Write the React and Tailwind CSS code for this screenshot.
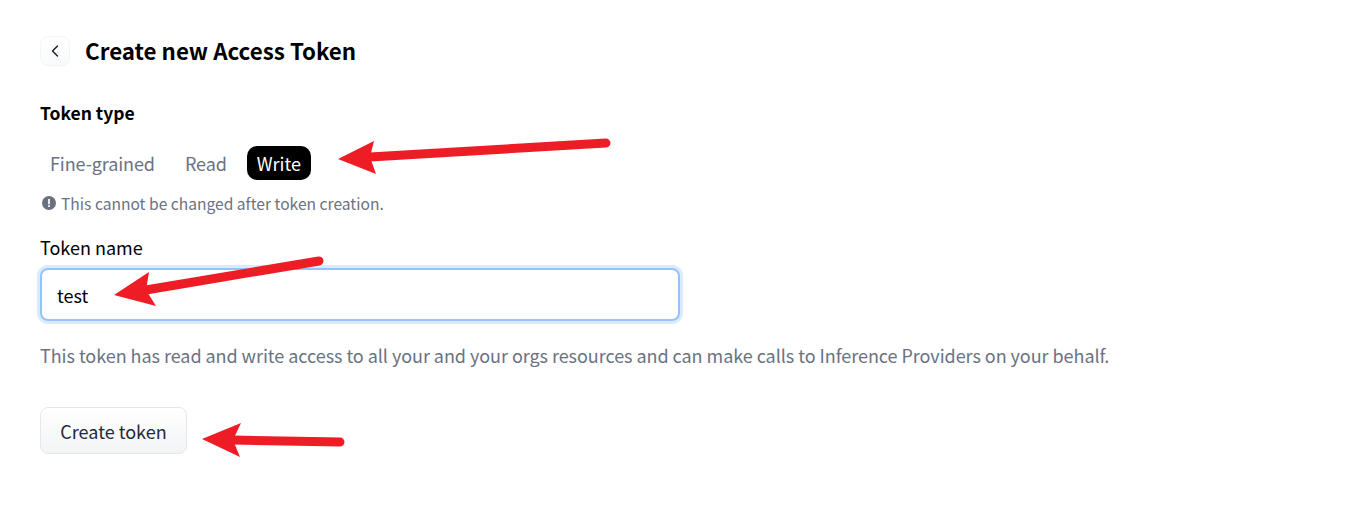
import { ChevronLeft } from 'lucide-react'

function Arrow({ tail, tip, wingA, wingB, neck }) {
  return (
    <>
      <line x1={tail[0]} y1={tail[1]} x2={neck[0]} y2={neck[1]} stroke="#ee1c25" strokeWidth="9" strokeLinecap="round" />
      <polygon points={`${tip[0]},${tip[1]} ${wingA[0]},${wingA[1]} ${neck[0]},${neck[1]} ${wingB[0]},${wingB[1]}`} fill="#ee1c25" />
    </>
  )
}

export default function App() {
  return (
    <div className='relative h-[516px] w-[1358px] overflow-hidden bg-white pl-10 pt-9 font-["Noto_Sans_CJK_SC",sans-serif]'>
      <div className="flex items-center gap-[15px]">
        <button className="flex h-[30px] w-[30px] items-center justify-center rounded-lg border border-gray-100 bg-gradient-to-b from-white to-gray-50">
          <ChevronLeft size={20} strokeWidth={1.6} className="text-gray-900" />
        </button>
        <h1 className="pb-0.5 text-[22.35px] font-bold leading-[28px] text-black">Create new Access Token</h1>
      </div>

      <div className="mt-[35px] text-[17.5px] font-bold leading-6 text-black">Token type</div>

      <div className="mt-[21px] flex items-center gap-2.5 text-lg leading-[34px] tracking-[-0.1px] text-gray-500">
        <span className="rounded-lg px-2.5">Fine-grained</span>
        <span className="rounded-lg px-2.5">Read</span>
        <span className="rounded-[10px] bg-black px-2.5 tracking-normal text-white">Write</span>
      </div>

      <div className="mt-[13px] flex items-center gap-[5px] pl-0.5 text-[15.6px] leading-5 text-gray-500">
        <svg viewBox="0 0 16 16" className="h-[14px] w-[14px]" fill="currentColor">
          <path fillRule="evenodd" d="M8 0a8 8 0 1 1 0 16A8 8 0 0 1 8 0Zm-1 3.5h2v6H7v-6Zm0 7h2v2H7v-2Z" />
        </svg>
        This cannot be changed after token creation.
      </div>

      <label className="mt-[22px] block text-lg leading-6 text-black">Token name</label>

      <div className="mt-[9px] flex h-[53px] w-[640px] items-center rounded-lg border-2 border-[#93c5fd] bg-white pl-[15px] text-lg text-black shadow-[0_0_0_3px_#dbeafe]">
        test
      </div>

      <p className="mt-[22px] text-lg leading-6 tracking-[-0.046px] text-gray-500">
        This token has read and write access to all your and your orgs resources and can make calls to Inference Providers on your behalf.
      </p>

      <button className="mt-[40px] flex h-[47px] w-[147px] items-center justify-center rounded-lg border border-gray-200 bg-gradient-to-b from-white to-gray-100 text-lg text-gray-800">
        Create token
      </button>

      {/* red annotation arrows drawn over the page */}
      <svg className="pointer-events-none absolute left-0 top-0" width="1358" height="516">
        <Arrow tail={[606, 143]} tip={[338, 159]} wingA={[374, 141]} wingB={[376, 174]} neck={[370, 157]} />
        <Arrow tail={[319, 261]} tip={[114, 295]} wingA={[149, 272]} wingB={[156, 306]} neck={[146, 290]} />
        <Arrow tail={[340, 442]} tip={[202, 439]} wingA={[241, 423]} wingB={[240, 457]} neck={[233, 440]} />
      </svg>
    </div>
  )
}
